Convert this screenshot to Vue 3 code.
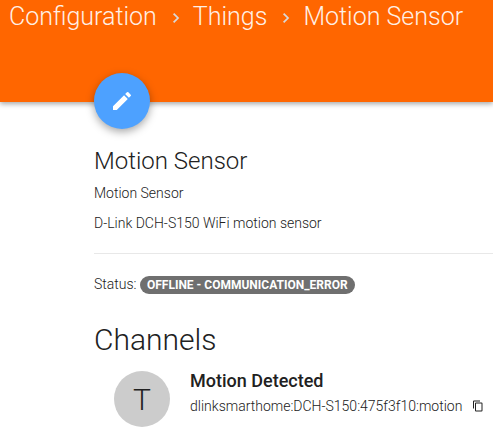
<script setup>
const crumbs = ['Configuration', 'Things', 'Motion Sensor']
</script>

<template>
  <div class="page">
    <header class="bar">
      <template v-for="(c, i) in crumbs" :key="c">
        <svg v-if="i" class="chev" viewBox="0 0 10 14" width="10" height="14"><path d="M2 1.5 7.5 7 2 12.5" fill="none" stroke="currentColor" stroke-width="2.2"/></svg>
        <span class="crumb">{{ c }}</span>
      </template>
    </header>
    <main class="content">
      <button class="fab" aria-label="Edit">
        <svg viewBox="0 0 24 24" width="24" height="24"><path fill="#fff" d="M3 17.25V21h3.75L17.81 9.94l-3.75-3.75L3 17.25zM20.71 7.04a1 1 0 0 0 0-1.41l-2.34-2.34a1 1 0 0 0-1.41 0l-1.83 1.83 3.75 3.75 1.83-1.83z"/></svg>
      </button>
      <h1 class="title">Motion Sensor</h1>
      <p class="label">Motion Sensor</p>
      <p class="desc">D-Link DCH-S150 WiFi motion sensor</p>
      <hr class="rule" />
      <div class="status">Status: <span class="badge">OFFLINE - COMMUNICATION_ERROR</span></div>
      <h2 class="channels">Channels</h2>
      <div class="item">
        <div class="avatar">T</div>
        <div class="info">
          <div class="name">Motion Detected</div>
          <div class="uid">
            <span>dlinksmarthome:DCH-S150:475f3f10:motion</span>
            <svg viewBox="0 0 24 24" width="12" height="12"><path fill="#222" d="M16 1H4a2 2 0 0 0-2 2v14h2V3h12V1zm3 4H8a2 2 0 0 0-2 2v14a2 2 0 0 0 2 2h11a2 2 0 0 0 2-2V7a2 2 0 0 0-2-2zm0 16H8V7h11v14z"/></svg>
          </div>
        </div>
      </div>
    </main>
  </div>
</template>

<style>
html, body { margin: 0; background: #fff; overflow: hidden; }
</style>

<style scoped>
.page { width: 493px; height: 431px; overflow: hidden; font-family: Roboto, sans-serif; color: #212121; }
.bar { height: 102px; box-sizing: border-box; background: #ff6600; box-shadow: 0 2px 5px rgba(0,0,0,.35); display: flex; align-items: flex-start; padding: 0 0 0 9px; color: #fff; font-weight: 300; font-size: 25px; line-height: 34px; white-space: nowrap; }
.crumb { opacity: .9; }
.chev { margin: 11px 13px 0 15px; width: 8px; color: #d9d9d9; flex: none; }
.content { padding-left: 94px; position: relative; }
.fab { display: block; width: 56px; height: 56px; margin-top: -29px; border: 0; padding: 0; border-radius: 50%; background: #4da1ff; box-shadow: 0 3px 8px rgba(0,0,0,.35); position: relative; }
.fab svg { display: block; margin: 16px; }
.title { margin: 17px 0 0; font-size: 24px; font-weight: 300; line-height: 30px; }
.label { margin: 9px 0 0; font-size: 14px; font-weight: 300; line-height: 17px; }
.desc { margin: 13px 0 0; font-size: 14px; font-weight: 300; line-height: 17px; }
.rule { margin: 21px 0 0; border: 0; border-top: 1px solid #e8e8e8; }
.status { margin-top: 21px; font-size: 14px; font-weight: 300; line-height: 18px; }
.badge { display: inline-block; background: #6f6f6f; color: #fff; font-weight: 700; font-size: 12px; line-height: 18px; border-radius: 9px; padding: 0 7px; }
.channels { margin: 27px 0 0; font-size: 30px; font-weight: 300; line-height: 38px; }
.item { display: flex; margin: 12px 0 0 20px; }
.avatar { width: 56px; height: 56px; border-radius: 50%; background: #ccc; font-size: 30px; font-weight: 300; display: flex; align-items: center; justify-content: center; flex: none; }
.info { margin-left: 20px; }
.name { font-size: 18px; font-weight: 500; line-height: 20px; }
.uid { display: flex; align-items: center; gap: 10px; font-size: 14px; font-weight: 300; line-height: 20px; margin-top: 5px; }
</style>
